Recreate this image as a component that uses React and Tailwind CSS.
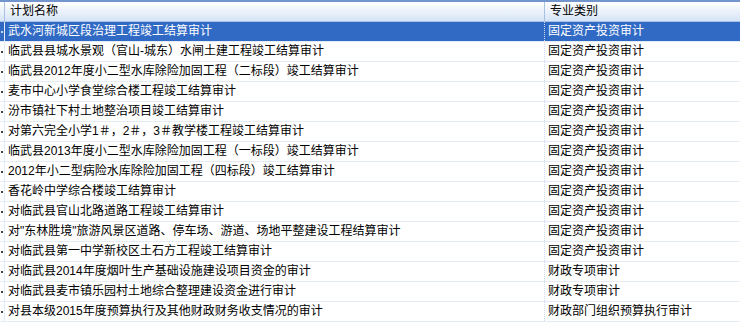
const rows = [
  ['武水河新城区段治理工程竣工结算审计', '固定资产投资审计'],
  ['临武县县城水景观（官山-城东）水闸土建工程竣工结算审计', '固定资产投资审计'],
  ['临武县2012年度小二型水库除险加固工程（二标段）竣工结算审计', '固定资产投资审计'],
  ['麦市中心小学食堂综合楼工程竣工结算审计', '固定资产投资审计'],
  ['汾市镇社下村土地整治项目竣工结算审计', '固定资产投资审计'],
  ['对第六完全小学1＃，2＃，3＃教学楼工程竣工结算审计', '固定资产投资审计'],
  ['临武县2013年度小二型水库除险加固工程（一标段）竣工结算审计', '固定资产投资审计'],
  ['2012年小二型病险水库除险加固工程（四标段）竣工结算审计', '固定资产投资审计'],
  ['香花岭中学综合楼竣工结算审计', '固定资产投资审计'],
  ['对临武县官山北路道路工程竣工结算审计', '固定资产投资审计'],
  ['对"东林胜境"旅游风景区道路、停车场、游道、场地平整建设工程结算审计', '固定资产投资审计'],
  ['对临武县第一中学新校区土石方工程竣工结算审计', '固定资产投资审计'],
  ['对临武县2014年度烟叶生产基础设施建设项目资金的审计', '财政专项审计'],
  ['对临武县麦市镇乐园村土地综合整理建设资金进行审计', '财政专项审计'],
  ['对县本级2015年度预算执行及其他财政财务收支情况的审计', '财政部门组织预算执行审计'],
];

const App = () => {
  return (
    <div
      className="w-[740px] h-[323px] overflow-hidden bg-white text-[12px] text-black"
      style={{ fontFamily: '"Liberation Sans", "Noto Sans CJK SC", sans-serif' }}
    >
      {/* header */}
      <div className="flex h-[22px] border-t-2 border-[#7195cc] border-b border-b-[#a8c2e6] bg-gradient-to-b from-white to-[#d6e4f7]">
        <div className="w-[5px] shrink-0 border-r border-[#a8c2e6]" />
        <div className="w-[540px] shrink-0 pl-[5px] leading-[19px] border-r border-[#a8c2e6]">计划名称</div>
        <div className="flex-1 pl-[5px] leading-[19px]">专业类别</div>
      </div>

      {rows.map(([name, kind], i) => {
        const selected = i === 0;
        return (
          <div
            key={i}
            className={
              selected
                ? 'flex h-[20px] bg-[#316ac5] text-white border-b border-[#e3ebf6]'
                : 'flex h-[20px] border-b border-[#e3ebf6]'
            }
          >
            <div className="w-[5px] shrink-0 flex items-center border-r border-[#e3ebf6]">
              <div className={selected ? 'w-[2px] h-[2px] ml-[1px] bg-[#c8d8f0]' : 'w-[2px] h-[2px] ml-[1px] bg-[#404040]'} />
            </div>
            <div className="w-[540px] shrink-0 pl-[3px] leading-[19px] whitespace-nowrap overflow-hidden border-r border-dotted border-[#cfdcef]">
              {name}
            </div>
            <div className="flex-1 pl-[3px] leading-[19px] whitespace-nowrap overflow-hidden">{kind}</div>
          </div>
        );
      })}
    </div>
  );
};

export default App;
